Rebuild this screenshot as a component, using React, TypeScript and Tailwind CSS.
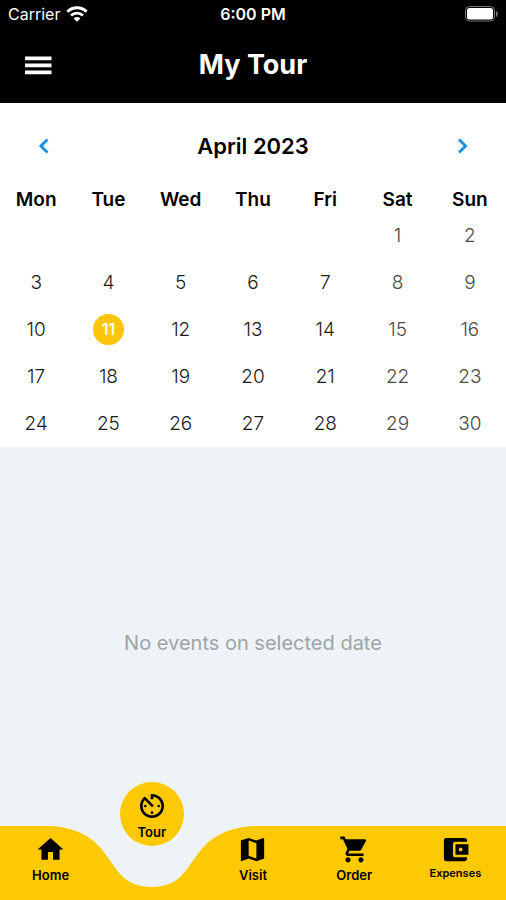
import { useState } from "react";
import type { IconType } from "react-icons";
import { MdAccountBalanceWallet, MdAvTimer, MdHome, MdMap, MdShoppingCart } from "react-icons/md";

const WEEKDAYS = ["Mon", "Tue", "Wed", "Thu", "Fri", "Sat", "Sun"];

const WEEKS: (number | null)[][] = [
  [null, null, null, null, null, 1, 2],
  [3, 4, 5, 6, 7, 8, 9],
  [10, 11, 12, 13, 14, 15, 16],
  [17, 18, 19, 20, 21, 22, 23],
  [24, 25, 26, 27, 28, 29, 30],
];

function StatusBar() {
  return (
    <div className="grid h-7 grid-cols-3 items-center px-2 text-base font-medium">
      <div className="flex items-center gap-1.5">
        <span className="font-normal">Carrier</span>
        <svg className="h-4 w-[22px]" viewBox="0 0 22 16" fill="none" stroke="currentColor" aria-hidden="true">
          <path d="M1.4 5.8a13.5 13.5 0 0 1 19.2 0" strokeWidth="3" />
          <path d="M5 9.6a8.6 8.6 0 0 1 12 0" strokeWidth="2.8" />
          <path d="M11 15.8 7.6 12.4a4.9 4.9 0 0 1 6.8 0z" fill="currentColor" stroke="none" />
        </svg>
      </div>
      <span className="text-center font-semibold">6:00 PM</span>
      <svg className="h-4 w-[33px] justify-self-end" viewBox="0 0 33 16" aria-hidden="true">
        <rect x="0.5" y="0.5" width="29" height="14.5" rx="4" fill="none" stroke="#777" />
        <rect x="2" y="2" width="26" height="11.5" rx="2.5" fill="#fff" />
        <path d="M31 5v6c2.4-1 2.4-5 0-6z" fill="#777" />
      </svg>
    </div>
  );
}

function Header() {
  return (
    <header className="bg-black text-white">
      <StatusBar />
      <div className="grid h-[75px] grid-cols-[1fr_auto_1fr] items-center px-5">
        <button type="button" aria-label="Open menu" className="justify-self-start">
          <svg className="size-9" viewBox="0 0 36 36" fill="currentColor" aria-hidden="true">
            <path d="M5 8.5h26.5v3.8H5zM5 15.5h26.5v3.8H5zM5 22.5h26.5v3.8H5z" />
          </svg>
        </button>
        <h1 className="text-[27px] font-bold">My Tour</h1>
      </div>
    </header>
  );
}

function Chevron({ path }: { path: string }) {
  return (
    <svg className="size-8" viewBox="0 0 32 32" fill="none" stroke="currentColor" strokeWidth="2.8" aria-hidden="true">
      <path d={path} />
    </svg>
  );
}

function Calendar({ selected, onSelect }: { selected: number; onSelect: (day: number) => void }) {
  return (
    <section className="bg-white pt-[23px]" aria-label="Calendar">
      <div className="flex h-10 items-center justify-between px-7">
        <button type="button" aria-label="Previous month" className="text-[#0f8fee]">
          <Chevron path="M19.5 9.4 12.9 16l6.6 6.6" />
        </button>
        <h2 className="text-[22px] font-semibold">April 2023</h2>
        <button type="button" aria-label="Next month" className="text-[#0f8fee]">
          <Chevron path="M13 9.4 19.6 16 13 22.6" />
        </button>
      </div>
      <table className="mt-[21px] w-full table-fixed border-collapse text-center">
        <thead>
          <tr>
            {WEEKDAYS.map((name) => (
              <th key={name} scope="col" className="h-[25px] p-0 text-[19px] leading-6 font-semibold">
                {name}
              </th>
            ))}
          </tr>
        </thead>
        <tbody>
          {WEEKS.map((week, row) => (
            <tr key={row}>
              {week.map((day, column) => (
                <td key={column} className="h-[47px] p-0 align-middle">
                  {day !== null && (
                    <button
                      type="button"
                      onClick={() => onSelect(day)}
                      className={
                        day === selected
                          ? "size-[31px] rounded-full bg-[#fcc509] text-base leading-[31px] font-semibold text-white"
                          : column > 4
                            ? "size-[31px] text-[19px] leading-[31px] font-light text-[#4a4a4a]"
                            : "size-[31px] text-[19px] leading-[31px] font-light text-[#1a1a1a]"
                      }
                    >
                      {day}
                    </button>
                  )}
                </td>
              ))}
            </tr>
          ))}
        </tbody>
      </table>
    </section>
  );
}

function NavItem({ label, icon: Icon, small = false }: { label: string; icon: IconType; small?: boolean }) {
  return (
    <a href={"#" + label.toLowerCase()} className="flex flex-col items-center pt-2">
      <Icon size={31} />
      <span className={small ? "text-[11px] leading-4 font-semibold" : "text-[13px] leading-5 font-semibold"}>
        {label}
      </span>
    </a>
  );
}

function BottomNav() {
  return (
    <nav className="relative h-[74px]" aria-label="Main">
      <svg
        className="absolute inset-0 size-full"
        viewBox="0 0 506 74"
        preserveAspectRatio="none"
        fill="#fcc902"
        aria-hidden="true"
      >
        <path d="M0 0H51C121 5 101 61 152 61C202 61 182 5 253 0H506V74H0Z" />
      </svg>
      <div className="relative grid grid-cols-5">
        <NavItem label="Home" icon={MdHome} />
        <div className="relative">
          <a
            href="#tour"
            aria-current="page"
            className="absolute -top-11 left-1/2 flex size-16 -translate-x-1/2 flex-col items-center rounded-full bg-[#fcc902] pt-2"
          >
            <MdAvTimer size={32} />
            <span className="text-[13px] leading-5 font-semibold">Tour</span>
          </a>
        </div>
        <NavItem label="Visit" icon={MdMap} />
        <NavItem label="Order" icon={MdShoppingCart} />
        <NavItem label="Expenses" icon={MdAccountBalanceWallet} small />
      </div>
    </nav>
  );
}

export default function App() {
  const [selected, setSelected] = useState(11);
  return (
    <div className="flex min-h-screen flex-col bg-[#edf3f6] font-['Inter',sans-serif] text-black">
      <Header />
      <Calendar selected={selected} onSelect={setSelected} />
      <main className="flex flex-1 items-center justify-center pt-3">
        <p className="text-xl text-[#a0a4a6]">No events on selected date</p>
      </main>
      <BottomNav />
    </div>
  );
}
